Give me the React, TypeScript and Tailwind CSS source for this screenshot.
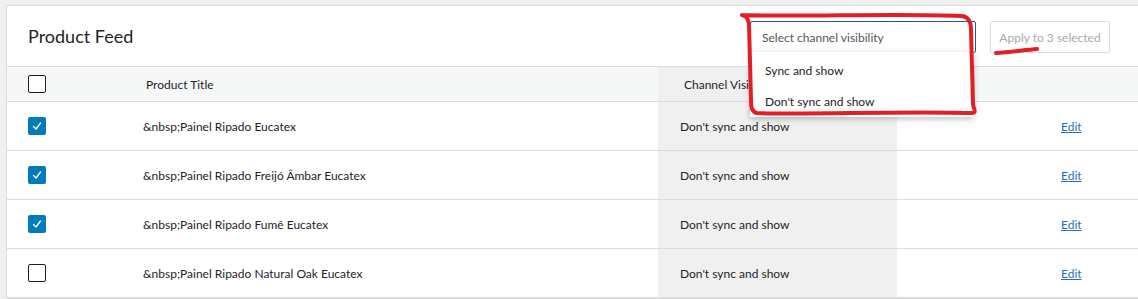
import React from "react";

type Row = { title: string; checked: boolean };

const rows: Row[] = [
  { title: "&nbsp;Painel Ripado Eucatex", checked: true },
  { title: "&nbsp;Painel Ripado Freijó Âmbar Eucatex", checked: true },
  { title: "&nbsp;Painel Ripado Fumê Eucatex", checked: true },
  { title: "&nbsp;Painel Ripado Natural Oak Eucatex", checked: false },
];

function Checkbox({ checked }: { checked: boolean }) {
  if (checked) {
    return (
      <div className="w-[18px] h-[18px] rounded-[2px] bg-[#007cba] flex items-center justify-center">
        <svg width="12" height="12" viewBox="0 0 12 12" fill="none">
          <path d="M2.5 6.5 L5 9 L9.5 3" stroke="white" strokeWidth="1.4" strokeLinecap="round" strokeLinejoin="round" />
        </svg>
      </div>
    );
  }
  return <div className="w-[18px] h-[18px] rounded-[2px] border-[1.5px] border-[#1e1e1e] bg-white" />;
}

export default function App() {
  return (
    <div
      className="relative w-[1138px] h-[299px] overflow-hidden bg-[#f0f0f1] pt-[5px] pl-[6px]"
      style={{ fontFamily: 'Lato, "Liberation Sans", sans-serif' }}
    >
      <div className="bg-white border border-[#dcdcde] border-r-0 w-[1140px]">
        {/* header */}
        <div className="relative h-[61px] flex items-center pl-[21px] pt-[1px] border-b border-[#dcdcde]">
          <h2 className="text-[18px] text-[#1d2327]">Product Feed</h2>
          <div className="absolute left-[743px] top-[15px] flex gap-[14px]">
            <div className="relative">
              <div className="w-[226px] h-[32px] border border-[#215a7c] rounded-[2px] flex items-center pl-[11px] pt-[1px] text-[12px] text-[#50575e] bg-white">
                Select channel visibility
              </div>
              <div className="absolute left-0 top-[31px] w-[224px] h-[65px] bg-white shadow-[0_2px_6px_rgba(0,0,0,0.25)] z-10 flex flex-col text-[12px] text-[#1d2327]">
                <div className="h-[33px] flex items-center pl-[15px] pt-[4px]">Sync and show</div>
                <div className="h-[32px] flex items-center pl-[15px] pt-[2px]">Don't sync and show</div>
              </div>
            </div>
            <button className="w-[120px] h-[32px] border border-[#dcdcde] rounded-[2px] text-[12px] text-[#a7aaad] bg-white pt-[1px]">
              Apply to 3 selected
            </button>
          </div>
        </div>

        {/* table head */}
        <div className="flex h-[35px] bg-[#f6f7f7] border-b border-[#dcdcde] text-[12px] text-[#1d2327]">
          <div className="w-[136px] pl-[21px] flex items-center">
            <Checkbox checked={false} />
          </div>
          <div className="w-[515px] pl-[3px] pt-[1px] flex items-center">Product Title</div>
          <div className="w-[239px] pl-[26px] pt-[1px] flex items-center bg-[#f0f0f0]">Channel Visibility</div>
          <div className="flex-1" />
        </div>

        {/* rows */}
        {rows.map((r, i) => (
          <div key={i} className="flex h-[49px] border-b border-[#dcdcde] text-[12px] text-[#1d2327]">
            <div className="w-[136px] pl-[21px] flex items-center">
              <Checkbox checked={r.checked} />
            </div>
            <div className="w-[515px] pt-[1px] flex items-center">{r.title}</div>
            <div className="w-[239px] pl-[22px] pt-[1px] flex items-center bg-[#f0f0f0]">Don't sync and show</div>
            <div className="flex-1 pl-[164px] pt-[1px] flex items-center">
              <a href="#" className="text-[#2271b1] underline">Edit</a>
            </div>
          </div>
        ))}
      </div>

      {/* red annotation */}
      <svg className="absolute left-0 top-0 pointer-events-none z-20" width="1138" height="299" viewBox="0 0 1138 299" fill="none">
        <path
          d="M742 15 C800 17 900 13 962 16 C969 17 971 22 971 30 L973 104 C974 111 978 113 969 113 C900 111 800 115 757 113 C752 112 751 108 751 100 L749 24 C748 18 746 16 742 15"
          stroke="#e21f26"
          strokeWidth="4"
          strokeLinecap="round"
          strokeLinejoin="round"
        />
        <path d="M996 53 C1010 52 1025 50 1037 49" stroke="#e21f26" strokeWidth="4" strokeLinecap="round" />
      </svg>
    </div>
  );
}
